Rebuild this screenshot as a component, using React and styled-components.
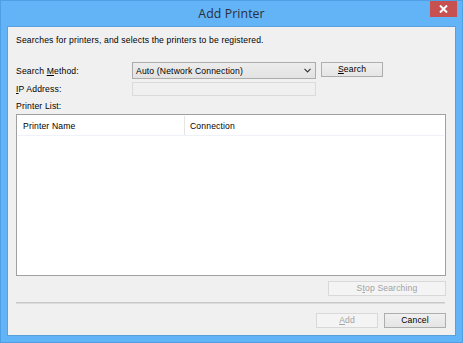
import React from "react";
import styled, { createGlobalStyle } from "styled-components";

const Global = createGlobalStyle`
  html, body { margin: 0; padding: 0; }
  body { width: 463px; height: 343px; overflow: hidden; background: #63b3f7; }
  * { box-sizing: border-box; }
`;

const Window = styled.div`
  width: 463px;
  height: 343px;
  background: #63b3f7;
  border: 1px solid #4d9fe6;
  display: flex;
  flex-direction: column;
  padding: 0 6px 6px 6px;
  font-family: "Liberation Sans", Arial, sans-serif;
`;

const TitleBar = styled.div`
  height: 25px;
  flex: none;
  display: flex;
  align-items: center;
  justify-content: center;
  position: relative;
`;

const Title = styled.div`
  font-family: "Open Sans", "Liberation Sans", sans-serif;
  font-size: 12.3px;
  color: #2a2f36;
  letter-spacing: 0.1px;
`;

const Close = styled.div`
  position: absolute;
  right: -1px;
  top: 0;
  width: 27px;
  height: 16px;
  background: #c75050;
  display: flex;
  align-items: center;
  justify-content: center;
`;

const Content = styled.div`
  flex: 1;
  background: #f0f0f0;
  border: 1px solid #5aa0dc;
  display: flex;
  flex-direction: column;
  padding: 0 9px 0 8px;
  font-size: 8.6px;
  color: #000;
  letter-spacing: 0.15px;
`;

const Desc = styled.div`
  height: 14px;
  margin-top: 6px;
  line-height: 14px;
`;

const FormGrid = styled.div`
  display: grid;
  grid-template-columns: 111px 184px 62px;
  column-gap: 5px;
  row-gap: 3px;
  margin-top: 15px;
  align-items: center;
`;

const Label = styled.div`
  line-height: 14px;
`;

const U = styled.span`
  text-decoration: underline;
  text-underline-offset: 1px;
`;

const Combo = styled.div`
  height: 17px;
  border: 1px solid #acacac;
  background: linear-gradient(#ececec, #e3e3e3);
  display: flex;
  align-items: center;
  justify-content: space-between;
  padding: 0 4px 0 3px;
`;

const Field = styled.div`
  height: 14px;
  border: 1px solid #dadada;
  background: #f0f0f0;
`;

const Button = styled.div`
  height: ${(p) => p.$h || 15}px;
  width: ${(p) => p.$w}px;
  border: 1px solid ${(p) => (p.$disabled ? "#d9d9d9" : "#adadad")};
  background: ${(p) => (p.$disabled ? "#f4f4f4" : "linear-gradient(#f0f0f0, #e5e5e5)")};
  color: ${(p) => (p.$disabled ? "#a3a3a3" : "#000")};
  display: flex;
  align-items: center;
  justify-content: center;
  line-height: 13px;
  align-self: ${(p) => p.$align || "auto"};
`;

const ListLabel = styled.div`
  margin-top: 3px;
  line-height: 14px;
`;

const ListBox = styled.div`
  margin-top: 1px;
  height: 162px;
  border: 1px solid #a0a0a0;
  background: #fff;
  display: flex;
  flex-direction: column;
  padding: 1px;
`;

const Header = styled.div`
  height: 20px;
  display: grid;
  grid-template-columns: 167px 1fr;
  border-bottom: 1px solid #eef2f8;
`;

const HeaderCell = styled.div`
  padding-left: 5px;
  display: flex;
  align-items: center;
  border-right: 1px solid ${(p) => (p.$last ? "transparent" : "#e5e5e5")};
`;

const StopRow = styled.div`
  display: flex;
  justify-content: flex-end;
  margin-top: 5px;
`;

const Separator = styled.div`
  margin-top: 6px;
  height: 2px;
  border-top: 1px solid #c8c8c8;
  border-bottom: 1px solid #dcdcdc;
  margin-right: 1px;
`;

const Footer = styled.div`
  display: flex;
  justify-content: flex-end;
  gap: 6px;
  margin-top: 9px;
`;

export default function App() {
  return (
    <>
      <Global />
      <Window>
        <TitleBar>
          <Title>Add Printer</Title>
          <Close>
            <svg width="9" height="8" viewBox="0 0 9 8">
              <path d="M1 0.5 L8 7.5 M8 0.5 L1 7.5" stroke="#fff" strokeWidth="2" />
            </svg>
          </Close>
        </TitleBar>
        <Content>
          <Desc>Searches for printers, and selects the printers to be registered.</Desc>
          <FormGrid>
            <Label>
              Search <U>M</U>ethod:
            </Label>
            <Combo>
              <span>Auto (Network Connection)</span>
              <svg width="7" height="5" viewBox="0 0 7 5">
                <path d="M0.5 0.8 L3.5 4 L6.5 0.8" stroke="#333" strokeWidth="1.1" fill="none" />
              </svg>
            </Combo>
            <Button $w={62} $align="start">
              <span>
                <U>S</U>earch
              </span>
            </Button>
            <Label>
              <U>I</U>P Address:
            </Label>
            <Field />
            <div />
          </FormGrid>
          <ListLabel>Printer List:</ListLabel>
          <ListBox>
            <Header>
              <HeaderCell>Printer Name</HeaderCell>
              <HeaderCell $last>Connection</HeaderCell>
            </Header>
          </ListBox>
          <StopRow>
            <Button $w={118} $disabled>
              <span>
                S<U>t</U>op Searching
              </span>
            </Button>
          </StopRow>
          <Separator />
          <Footer>
            <Button $w={62} $disabled>
              <span>
                <U>A</U>dd
              </span>
            </Button>
            <Button $w={62}>Cancel</Button>
          </Footer>
        </Content>
      </Window>
    </>
  );
}
